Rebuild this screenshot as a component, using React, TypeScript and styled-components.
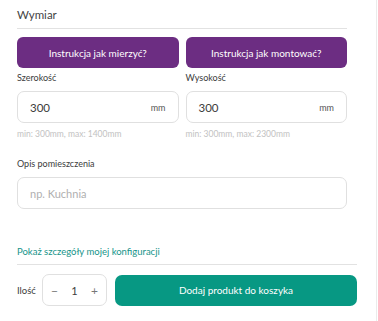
import React, { useState } from 'react';
import styled, { createGlobalStyle } from 'styled-components';

const GlobalStyle = createGlobalStyle`
  html, body {
    margin: 0;
    padding: 0;
    background: #ffffff;
    font-family: Lato, 'Liberation Sans', sans-serif;
  }
`;

type FieldProps = {
  label: string;
  value: string;
  hint: string;
};

const SizeField: React.FC<FieldProps> = ({ label, value, hint }) => (
  <FieldColumn>
    <Label>{label}</Label>
    <InputBox>
      <InputValue>{value}</InputValue>
      <Unit>mm</Unit>
    </InputBox>
    <Hint>{hint}</Hint>
  </FieldColumn>
);

const App: React.FC = () => {
  const [count, setCount] = useState(1);

  return (
    <>
      <GlobalStyle />
      <Panel>
        <Content>
          <Section>
            <Title>Wymiar</Title>
            <Divider />
            <ButtonRow>
              <PurpleButton>Instrukcja jak mierzyć?</PurpleButton>
              <PurpleButton>Instrukcja jak montować?</PurpleButton>
            </ButtonRow>
            <FieldsRow>
              <SizeField label="Szerokość" value="300" hint="min: 300mm, max: 1400mm" />
              <SizeField label="Wysokość" value="300" hint="min: 300mm, max: 2300mm" />
            </FieldsRow>
            <DescriptionBlock>
              <Label>Opis pomieszczenia</Label>
              <InputBox>
                <Placeholder>np. Kuchnia</Placeholder>
              </InputBox>
            </DescriptionBlock>
          </Section>
          <ConfigLink>Pokaż szczegóły mojej konfiguracji</ConfigLink>
          <Divider />
          <CartRow>
            <QtyLabel>Ilość</QtyLabel>
            <QtyBox>
              <QtyButton onClick={() => setCount((c) => Math.max(1, c - 1))}>−</QtyButton>
              <QtyValue>{count}</QtyValue>
              <QtyButton onClick={() => setCount((c) => c + 1)}>+</QtyButton>
            </QtyBox>
            <CartButton>Dodaj produkt do koszyka</CartButton>
          </CartRow>
        </Content>
      </Panel>
    </>
  );
};

export default App;

const Panel = styled.div`
  width: 377px;
  height: 321px;
  border-right: 1px solid #ebebeb;
  box-sizing: border-box;
`;

const Content = styled.div`
  width: 340px;
  padding: 7px 0 0 17px;
  display: flex;
  flex-direction: column;
`;

const Section = styled.div`
  width: 330px;
  display: flex;
  flex-direction: column;
`;

const Title = styled.div`
  font-size: 11.5px;
  line-height: 16px;
  color: #444444;
`;

const Divider = styled.div`
  height: 1px;
  background: #e2e2e2;
  margin-top: 5px;
`;

const ButtonRow = styled.div`
  display: grid;
  grid-template-columns: 1fr 1fr;
  gap: 7px;
  margin-top: 8px;
`;

const PurpleButton = styled.button`
  height: 31px;
  border: none;
  border-radius: 6px;
  background: #6c2d82;
  color: #ffffff;
  font-family: inherit;
  font-size: 10px;
  cursor: pointer;
`;

const FieldsRow = styled.div`
  display: grid;
  grid-template-columns: 1fr 1fr;
  gap: 7px;
  margin-top: 3px;
`;

const FieldColumn = styled.div`
  display: flex;
  flex-direction: column;
`;

const Label = styled.div`
  font-size: 9px;
  line-height: 13px;
  color: #3c3c3c;
  margin-bottom: 7px;
`;

const InputBox = styled.div`
  height: 32px;
  box-sizing: border-box;
  border: 1px solid #e0e0e0;
  border-radius: 7px;
  display: flex;
  align-items: center;
  justify-content: space-between;
  padding: 0 12px;
`;

const InputValue = styled.span`
  font-size: 11.5px;
  color: #3c3c3c;
`;

const Unit = styled.span`
  font-size: 9px;
  color: #555555;
`;

const Hint = styled.div`
  font-size: 8.5px;
  line-height: 12px;
  color: #c2c2c2;
  margin-top: 5px;
`;

const DescriptionBlock = styled.div`
  display: flex;
  flex-direction: column;
  margin-top: 17px;
`;

const Placeholder = styled.span`
  font-size: 11px;
  color: #b0b0b0;
`;

const ConfigLink = styled.a`
  font-size: 9.5px;
  line-height: 14px;
  color: #16948a;
  margin-top: 36px;
  cursor: pointer;
`;

const CartRow = styled.div`
  display: flex;
  align-items: center;
  margin-top: 9px;
`;

const QtyLabel = styled.span`
  font-size: 9.5px;
  color: #3c3c3c;
  width: 25px;
`;

const QtyBox = styled.div`
  width: 65px;
  height: 32px;
  box-sizing: border-box;
  border: 1px solid #e0e0e0;
  border-radius: 7px;
  display: flex;
  align-items: center;
  justify-content: space-between;
  padding: 0 4px;
`;

const QtyButton = styled.button`
  border: none;
  background: none;
  font-family: inherit;
  font-size: 12px;
  color: #777777;
  padding: 0 4px;
  cursor: pointer;
`;

const QtyValue = styled.span`
  font-size: 11px;
  color: #3c3c3c;
`;

const CartButton = styled.button`
  flex: 1;
  height: 31px;
  margin-left: 8px;
  border: none;
  border-radius: 7px;
  background: #079883;
  color: #ffffff;
  font-family: inherit;
  font-size: 10px;
  cursor: pointer;
`;
